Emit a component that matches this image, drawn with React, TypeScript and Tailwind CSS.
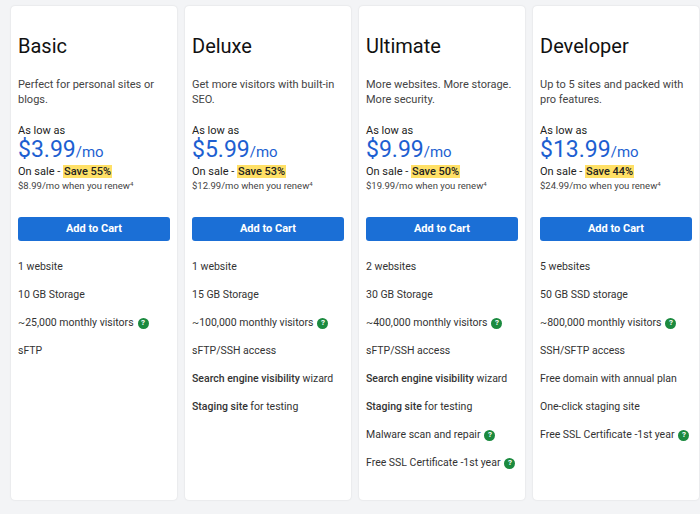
const plans = [
  {
    name: 'Basic', desc: 'Perfect for personal sites or blogs.', price: '$3.99', save: 'Save 55%', renew: '$8.99',
    features: [['1 website'], ['10 GB Storage'], ['~25,000 monthly visitors', '', true], ['sFTP']],
  },
  {
    name: 'Deluxe', desc: 'Get more visitors with built-in SEO.', price: '$5.99', save: 'Save 53%', renew: '$12.99',
    features: [['1 website'], ['15 GB Storage'], ['~100,000 monthly visitors', '', true], ['sFTP/SSH access'], ['Search engine visibility', ' wizard'], ['Staging site', ' for testing']],
  },
  {
    name: 'Ultimate', desc: 'More websites. More storage. More security.', price: '$9.99', save: 'Save 50%', renew: '$19.99',
    features: [['2 websites'], ['30 GB Storage'], ['~400,000 monthly visitors', '', true], ['sFTP/SSH access'], ['Search engine visibility', ' wizard'], ['Staging site', ' for testing'], ['Malware scan and repair', '', true], ['Free SSL Certificate -1st year', '', true]],
  },
  {
    name: 'Developer', desc: 'Up to 5 sites and packed with pro features.', price: '$13.99', save: 'Save 44%', renew: '$24.99',
    features: [['5 websites'], ['50 GB SSD storage'], ['~800,000 monthly visitors', '', true], ['SSH/SFTP access'], ['Free domain with annual plan'], ['One-click staging site'], ['Free SSL Certificate -1st year', '', true]],
  },
] as const;

function Help() {
  return (
    <span className="ml-1 inline-flex h-[11px] w-[11px] shrink-0 items-center justify-center rounded-full bg-[#1b8a3f] text-[8px] font-bold leading-none text-white">?</span>
  );
}

export default function App() {
  return (
    <div className="flex h-[514px] w-[700px] gap-[8px] bg-[#f3f4f6] pl-[11px] pt-[6px] pb-[14px] text-[#111]" style={{ fontFamily: 'Roboto, "Noto Sans", sans-serif' }}>
      {plans.map((p) => (
        <div key={p.name} className="w-[166px] rounded-[4px] bg-white px-[7px] pt-[30px] shadow-[0_0_2px_rgba(0,0,0,0.12)]">
          <h2 className="text-[20px] leading-[20px] text-[#111]">{p.name}</h2>
          <p className="mt-[21px] h-[30px] text-[11px] leading-[15px] text-[#444]">{p.desc}</p>
          <p className="mt-[17px] text-[11px] leading-[14px] text-[#222]">As low as</p>
          <p className="leading-[24px] text-[#1d5fd1]">
            <span className="text-[23px]">{p.price}</span>
            <span className="text-[15px]">/mo</span>
          </p>
          <p className="text-[11px] leading-[15px] text-[#222]">
            On sale - <span className="bg-[#ffe066] px-[1px] font-medium">{p.save}</span>
          </p>
          <p className="text-[9.5px] leading-[14px] text-[#444]">{p.renew}/mo when you renew<sup className="text-[6px]">4</sup></p>
          <button className="mt-[24px] h-[24px] w-full rounded-[3px] bg-[#1b6fd6] text-[11px] font-bold text-white">Add to Cart</button>
          <ul className="mt-[19px] flex flex-col gap-[14px]">
            {p.features.map((f, i) => (
              <li key={i} className="flex items-center whitespace-nowrap text-[10.5px] leading-[14px] text-[#333]">
                <span className={f[1] ? 'font-medium' : ''}>{f[0]}</span>
                {f[1] && <span className="whitespace-pre">{f[1]}</span>}
                {f[2] && <Help />}
              </li>
            ))}
          </ul>
        </div>
      ))}
    </div>
  );
}
